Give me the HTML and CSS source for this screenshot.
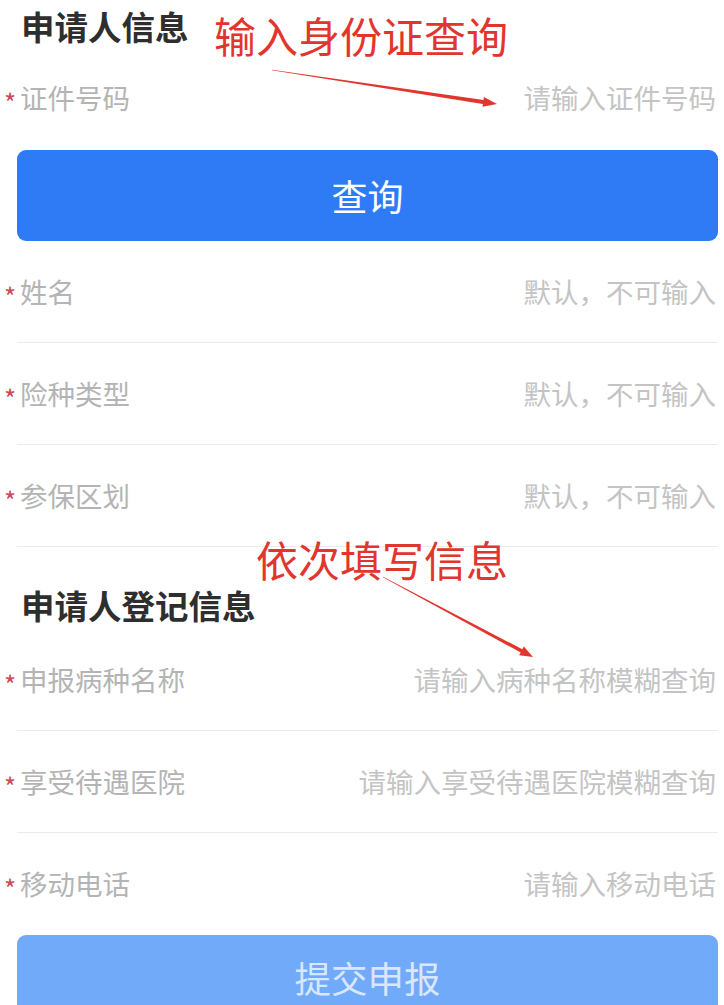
FILE: index.html
```html
<!DOCTYPE html>
<html lang="zh-CN">
<head>
<meta charset="utf-8">
<title>申请人信息</title>
<link rel="stylesheet" href="styles.css">
</head>
<body>
<div class="page">
  <h2 class="section-title first">申请人信息</h2>
  <div class="row plain">
    <span class="label"><span class="star">*</span>证件号码</span>
    <span class="ph">请输入证件号码</span>
  </div>
  <button class="btn primary">查询</button>
  <div class="row">
    <span class="label"><span class="star">*</span>姓名</span>
    <span class="ph">默认，不可输入</span>
  </div>
  <div class="row">
    <span class="label"><span class="star">*</span>险种类型</span>
    <span class="ph">默认，不可输入</span>
  </div>
  <div class="row">
    <span class="label"><span class="star">*</span>参保区划</span>
    <span class="ph">默认，不可输入</span>
  </div>

  <h2 class="section-title second">申请人登记信息</h2>
  <div class="row">
    <span class="label"><span class="star">*</span>申报病种名称</span>
    <span class="ph">请输入病种名称模糊查询</span>
  </div>
  <div class="row">
    <span class="label"><span class="star">*</span>享受待遇医院</span>
    <span class="ph">请输入享受待遇医院模糊查询</span>
  </div>
  <div class="row plain last">
    <span class="label"><span class="star">*</span>移动电话</span>
    <span class="ph">请输入移动电话</span>
  </div>
  <button class="btn disabled">提交申报</button>

  <div class="note note-1">输入身份证查询</div>
  <div class="note note-2">依次填写信息</div>
  <svg class="arrows" width="724" height="1005" viewBox="0 0 724 1005">
    <polygon points="272.04,69.70 483.5,99.9 483.9,97.0 497,104 482.5,106.8 482.9,103.9 271.96,70.30"/>
    <polygon points="383.14,576.74 522.3,649.3 523.9,646.5 533,657 519.1,655.3 520.7,652.5 382.86,577.26"/>
  </svg>
</div>
</body>
</html>
```

FILE: styles.css
```css
html, body {
  margin: 0;
  padding: 0;
  background: #ffffff;
}

body {
  font-family: "Noto Sans CJK SC", "Noto Sans", sans-serif;
  overflow: hidden;
}

.page {
  position: relative;
  width: 724px;
  height: 1005px;
  overflow: hidden;
}

.section-title {
  margin: 0;
  padding-left: 21px;
  font-size: 33.5px;
  font-weight: 700;
  line-height: 40px;
  color: #2e2e2e;
}

.section-title.first {
  padding-top: 6px;
  height: 40px;
}

.section-title.second {
  padding-top: 38px;
  padding-bottom: 4px;
  height: 40px;
}

.row {
  display: flex;
  align-items: center;
  justify-content: space-between;
  height: 101px;
  margin: 0 6px 0 17px;
  padding-right: 2px;
  border-bottom: 1px solid #ebebeb;
  font-size: 27.5px;
  line-height: 1;
}

.row.plain {
  height: 104px;
  border-bottom: none;
}

.row.plain.last {
  height: 102px;
}

.label {
  display: flex;
  align-items: center;
  color: #b4b4b4;
  margin-left: -13px;
}

.star {
  display: inline-block;
  width: 16px;
  margin-top: 8px;
  color: #cc4a52;
  font-size: 26px;
  line-height: 1;
  text-align: left;
}

.ph {
  color: #c4c4c4;
}

.btn {
  display: block;
  width: 701px;
  height: 91px;
  margin: 0 0 0 17px;
  padding: 0;
  border: none;
  border-radius: 9px;
  font-family: "Noto Sans CJK SC", "Noto Sans", sans-serif;
  font-size: 36px;
  line-height: 91px;
  text-align: center;
}

.btn.primary {
  background: #2f7bf6;
  color: #ffffff;
}

.btn.disabled {
  display: flex;
  align-items: flex-start;
  justify-content: center;
  box-sizing: border-box;
  height: 70px;
  padding-top: 24px;
  border-radius: 9px 9px 0 0;
  font-size: 36.5px;
  line-height: 38px;
  background: #70aaf8;
  color: #d8e7fd;
}

.note {
  position: absolute;
  font-size: 42px;
  line-height: 42px;
  color: #e2352d;
  white-space: nowrap;
}

.note-1 {
  left: 214px;
  top: 14px;
}

.note-2 {
  left: 256px;
  top: 538px;
}

.arrows {
  position: absolute;
  left: 0;
  top: 0;
  pointer-events: none;
}

.arrows polygon {
  fill: #e2352d;
}
```
